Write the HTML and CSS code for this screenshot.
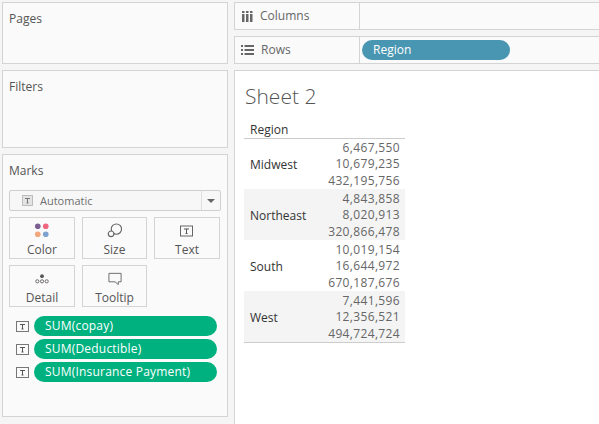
FILE: index.html
```html
<!DOCTYPE html>
<html lang="en">
<head>
    <meta charset="UTF-8">
    <title>Sheet 2</title>
    <link rel="stylesheet" href="styles.css">
</head>
<body>
    <div class="sidebar">
        <section class="card pages"><h2>Pages</h2></section>
        <section class="card filters"><h2>Filters</h2></section>
        <section class="card marks">
            <h2>Marks</h2>
            <div class="mark-select">
                <span class="select-label">
                    <svg class="select-icon" width="11" height="11" viewBox="0 0 11 11"><rect x="0.5" y="0.5" width="10" height="10" fill="#e4e4e4" stroke="#bdbdbd"/><path d="M3 3.5h5M5.5 3.500v4.500M4.500 8h2" fill="none" stroke="#777"/></svg>
                    Automatic
                </span>
                <span class="select-arrow"></span>
            </div>
            <div class="mark-buttons">
                <div class="mark-btn">
                    <svg width="16" height="16" viewBox="0 0 16 16"><circle cx="3.5" cy="3.5" r="3" fill="#7b5f93"/><circle cx="12" cy="3.5" r="3" fill="#f0647c"/><circle cx="3.5" cy="12" r="3" fill="#f3a57c"/><circle cx="12" cy="12" r="3" fill="#7ea3cf"/></svg>
                    <span>Color</span>
                </div>
                <div class="mark-btn">
                    <svg width="16" height="16" viewBox="0 0 16 16" fill="none" stroke="#666" stroke-width="1.2"><circle cx="9.5" cy="6.5" r="5.5"/><circle cx="3.8" cy="11.500" r="3" fill="#fafafa"/></svg>
                    <span>Size</span>
                </div>
                <div class="mark-btn">
                    <svg width="14" height="14" viewBox="0 0 14 14"><rect x="0.5" y="2.5" width="12" height="10" fill="none" stroke="#666"/><path d="M4 5.500h5M6.500 5.500v4.500M5.500 10h2" fill="none" stroke="#555"/></svg>
                    <span>Text</span>
                </div>
                <div class="mark-btn">
                    <svg width="16" height="16" viewBox="0 0 16 16"><circle cx="8" cy="5.5" r="2" fill="#555"/><g fill="none" stroke="#666"><circle cx="3" cy="11" r="1.7"/><circle cx="8" cy="11" r="1.7"/><circle cx="13" cy="11" r="1.7"/></g></svg>
                    <span>Detail</span>
                </div>
                <div class="mark-btn">
                    <svg width="16" height="16" viewBox="0 0 16 16"><path d="M1.5 2.500h13v9h-3v3l-3.500-3h-6.500z" fill="none" stroke="#666" stroke-linejoin="round"/></svg>
                    <span>Tooltip</span>
                </div>
            </div>
            <div class="mark-fields">
                <div class="field">
                    <svg class="field-icon" width="13" height="11" viewBox="0 0 13 11"><rect x="0.5" y="0.500" width="12" height="10" fill="none" stroke="#777"/><path d="M4 3.500h5M6.500 3.500v4.500M5.500 8h2" fill="none" stroke="#555"/></svg>
                    <span class="pill green">SUM(copay)</span>
                </div>
                <div class="field">
                    <svg class="field-icon" width="13" height="11" viewBox="0 0 13 11"><rect x="0.5" y="0.500" width="12" height="10" fill="none" stroke="#777"/><path d="M4 3.500h5M6.500 3.500v4.500M5.500 8h2" fill="none" stroke="#555"/></svg>
                    <span class="pill green">SUM(Deductible)</span>
                </div>
                <div class="field">
                    <svg class="field-icon" width="13" height="11" viewBox="0 0 13 11"><rect x="0.5" y="0.500" width="12" height="10" fill="none" stroke="#777"/><path d="M4 3.500h5M6.500 3.500v4.500M5.500 8h2" fill="none" stroke="#555"/></svg>
                    <span class="pill green">SUM(Insurance Payment)</span>
                </div>
            </div>
        </section>
    </div>

    <div class="main">
        <div class="shelf">
            <div class="shelf-label">
                <svg width="11" height="11" viewBox="0 0 11 11" fill="#666"><rect x="0" y="3" width="2.500" height="8"/><rect x="4" y="3" width="2.500" height="8"/><rect x="8" y="3" width="2.500" height="8"/><rect x="0" y="0" width="2.500" height="2"/><rect x="4" y="0" width="2.500" height="2"/><rect x="8" y="0" width="2.500" height="2"/></svg>
                <span class="shelf-name">Columns</span>
            </div>
            <div class="shelf-body"></div>
        </div>
        <div class="shelf">
            <div class="shelf-label">
                <svg class="rows-icon" width="13" height="10" viewBox="0 0 13 10" fill="#666"><rect x="0" y="0" width="2" height="2"/><rect x="3.500" y="0" width="9.500" height="2"/><rect x="0" y="4" width="2" height="2"/><rect x="3.500" y="4" width="9.500" height="2"/><rect x="0" y="8" width="2" height="2"/><rect x="3.500" y="8" width="9.500" height="2"/></svg>
                <span class="shelf-name">Rows</span>
            </div>
            <div class="shelf-body"><span class="pill blue">Region</span></div>
        </div>
        <div class="view">
            <h1>Sheet 2</h1>
            <div class="crosstab">
                <div class="crosstab-head">Region</div>
                <div class="region">
                    <div class="region-name">Midwest</div>
                    <div class="values"><span>6,467,550</span><span>10,679,235</span><span>432,195,756</span></div>
                </div>
                <div class="region shaded">
                    <div class="region-name">Northeast</div>
                    <div class="values"><span>4,843,858</span><span>8,020,913</span><span>320,866,478</span></div>
                </div>
                <div class="region">
                    <div class="region-name">South</div>
                    <div class="values"><span>10,019,154</span><span>16,644,972</span><span>670,187,676</span></div>
                </div>
                <div class="region shaded">
                    <div class="region-name">West</div>
                    <div class="values"><span>7,441,596</span><span>12,356,521</span><span>494,724,724</span></div>
                </div>
            </div>
        </div>
    </div>
</body>
</html>
```

FILE: styles.css
```css
html {
    font-size: 12px;
}

body {
    margin: 0;
    height: 424px;
    overflow: hidden;
    background-color: #f5f5f5;
    color: #555;
    font-family: "Open Sans", sans-serif;
    display: flex;
    gap: 6px;
    padding: 2px 0 0 2px;
    box-sizing: border-box;
}

h1, h2 {
    margin: 0;
    font-weight: 400;
}

.sidebar {
    width: 226px;
    display: flex;
    flex-direction: column;
    gap: 6px;
}

.card {
    box-sizing: border-box;
    background-color: #fafafa;
    border: 1px solid #d4d4d4;
    padding: 7px 6px;
}

.card h2 {
    font-size: 12px;
    line-height: 17px;
    color: #555;
}

.pages {
    height: 62px;
}

.filters {
    height: 78px;
}

.marks {
    height: 263px;
}

.mark-select {
    margin-top: 11px;
    height: 21px;
    box-sizing: border-box;
    background-color: #f7f7f7;
    border: 1px solid #cfcfcf;
    border-radius: 2px;
    display: flex;
    justify-content: space-between;
}

.select-label {
    display: flex;
    align-items: center;
    gap: 7px;
    padding-left: 12px;
    font-size: 11px;
    color: #707070;
}

.select-arrow {
    width: 18px;
    border-left: 1px solid #dedede;
    position: relative;
}

.select-arrow::after {
    content: "";
    position: absolute;
    left: 5px;
    top: 8px;
    border-left: 4px solid transparent;
    border-right: 4px solid transparent;
    border-top: 4px solid #666;
}

.mark-buttons {
    margin-top: 6px;
    display: grid;
    grid-template-columns: 66px 65px 66px;
    grid-auto-rows: 42px;
    column-gap: 7px;
    row-gap: 6px;
}

.mark-btn {
    box-sizing: border-box;
    border: 1px solid #d4d4d4;
    display: flex;
    flex-direction: column;
    align-items: center;
    padding-top: 5px;
}

.mark-btn svg {
    height: 16px;
}

.mark-btn span {
    line-height: 16px;
    margin-top: 4px;
}

.mark-fields {
    margin-top: 9px;
    display: flex;
    flex-direction: column;
    gap: 3px;
}

.field {
    display: flex;
    align-items: center;
    padding-left: 7px;
    gap: 5px;
}

.pill {
    box-sizing: border-box;
    height: 20px;
    line-height: 19px;
    border-radius: 10px;
    color: #fff;
    padding-left: 11px;
}

.pill.green {
    width: 183px;
    background-color: #00b180;
    letter-spacing: 0.2px;
}

.pill.blue {
    width: 148px;
    background-color: #4996b2;
}

.main {
    flex: 1;
    display: flex;
    flex-direction: column;
    gap: 6px;
}

.shelf {
    height: 28px;
    box-sizing: border-box;
    background-color: #fafafa;
    border: 1px solid #d4d4d4;
    border-right: 0;
    display: flex;
}

.shelf-label {
    width: 125px;
    box-sizing: border-box;
    border-right: 1px solid #d4d4d4;
    display: flex;
    align-items: center;
    gap: 7px;
    padding-left: 7px;
    color: #666;
}

.shelf-name {
    margin-top: -2px;
}

.rows-icon {
    margin-left: -1px;
}

.shelf-body {
    flex: 1;
    display: flex;
    align-items: center;
    padding-left: 2px;
}

.view {
    flex: 1;
    background-color: #fff;
    border: 1px solid #d4d4d4;
    border-right: 0;
    border-bottom: 0;
    padding: 0 0 0 9px;
}

.view h1 {
    font-size: 21px;
    font-weight: 300;
    line-height: 28px;
    margin: 11px 0 0 1px;
    color: #555;
}

.crosstab {
    width: 161px;
    margin-top: 11px;
    border-bottom: 1px solid #ccc;
}

.crosstab-head {
    height: 17px;
    line-height: 17px;
    padding-left: 6px;
    border-bottom: 1px solid #ccc;
    margin-bottom: -1px;
    color: #333;
}

.region {
    height: 51px;
    box-sizing: border-box;
    display: flex;
    justify-content: space-between;
    align-items: center;
    padding: 2px 5px 0 6px;
}

.shaded {
    background-color: #f4f4f4;
}

.region-name {
    color: #333;
}

.values {
    display: flex;
    flex-direction: column;
    text-align: right;
    line-height: 16.5px;
    letter-spacing: 0.35px;
    color: #666;
}
```
